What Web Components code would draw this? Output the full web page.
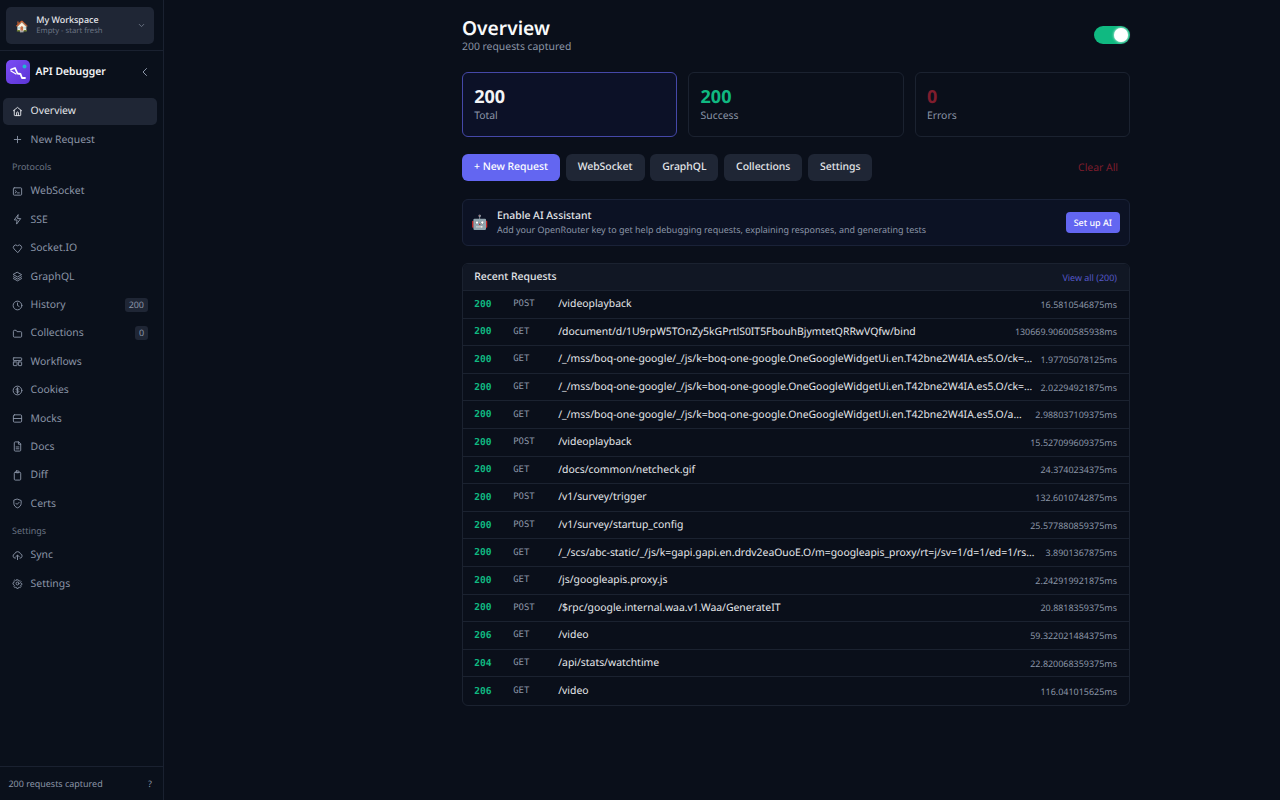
<!DOCTYPE html>
<html>
<head>
<meta charset="utf-8">
<title>API Debugger</title>
<style>
  html, body { margin: 0; height: 100%; background: #0a0f1a; }
  body { font-family: "Noto Sans", sans-serif; color: #f3f4f6; overflow: hidden; text-rendering: geometricPrecision; }
</style>
</head>
<body>
<app-shell>
  <app-sidebar slot="side"></app-sidebar>
  <overview-page></overview-page>
</app-shell>

<script>
const ICONS = {
  home: '<path d="M3 10.5 12 3l9 7.5"/><path d="M5 9v11a1 1 0 0 0 1 1h12a1 1 0 0 0 1-1V9"/><path d="M10 21v-6a2 2 0 0 1 4 0v6"/>',
  plus: '<path d="M5 12h14"/><path d="M12 5v14"/>',
  terminal: '<rect x="3" y="4" width="18" height="16" rx="2"/><path d="m7 10 3 2.5L7 15"/><path d="M12 15h4"/>',
  zap: '<path d="M13 2 5 13h6l-1 9 9-12h-6z"/>',
  heart: '<path d="M12 20.5 4.5 13a5 5 0 0 1 7-7.2l.5.5.5-.5a5 5 0 0 1 7 7.2z"/>',
  layers: '<path d="m12 3 9 5-9 5-9-5z"/><path d="m3 12.5 9 5 9-5"/><path d="m3 16.500 9 5 9-5"/>',
  clock: '<circle cx="12" cy="12" r="9.500"/><path d="M12 6.500V12l3.500 2"/>',
  folder: '<path d="M3 7a2 2 0 0 1 2-2h4l2 3h8a2 2 0 0 1 2 2v8a2 2 0 0 1-2 2H5a2 2 0 0 1-2-2z"/>',
  layout: '<rect x="3" y="4" width="18" height="6" rx="1"/><rect x="3" y="13" width="8" height="8" rx="1"/><rect x="14" y="13" width="7" height="8" rx="1"/>',
  dollar: '<circle cx="12" cy="12" r="9.500"/><path d="M15 9.200c-.5-1-1.600-1.700-3-1.700-1.800 0-3 1-3 2.300 0 3 6 1.500 6 4.400 0 1.300-1.300 2.300-3 2.300-1.400 0-2.500-.7-3-1.700"/><path d="M12 5.800v12.400"/>',
  server: '<rect x="3" y="4" width="18" height="16" rx="2.500"/><path d="M3 12h18"/>',
  file: '<path d="M14 2H7a2 2 0 0 0-2 2v16a2 2 0 0 0 2 2h10a2 2 0 0 0 2-2V7z"/><path d="M14 2v5h5"/><path d="M9 13h6"/><path d="M9 17h6"/>',
  clipboard: '<rect x="5" y="5" width="14" height="17" rx="2"/><rect x="9" y="2" width="6" height="4" rx="1"/>',
  shield: '<path d="M12 2.500 20 5.500v6c0 5-3.500 8.500-8 10-4.500-1.500-8-5-8-10v-6z"/><path d="m8.500 11.500 2.500 2.500 4.500-4.500"/>',
  cloud: '<path d="M12 21v-9"/><path d="m8 15 4-4 4 4"/><path d="M7 18a5 5 0 0 1-1-9.800 6.500 6.500 0 0 1 12.400 0A5 5 0 0 1 17.500 18"/>',
  gear: '<circle cx="12" cy="12" r="3.200"/><path d="M10.300 3h3.400l.5 2.600 1.800.8 2.300-1.500 2.400 2.400-1.500 2.300.8 1.800 2.600.5v3.400l-2.600.5-.8 1.800 1.500 2.300-2.400 2.400-2.300-1.500-1.800.8-.5 2.600h-3.400l-.5-2.600-1.800-.8-2.300 1.500-2.400-2.400 1.500-2.300-.8-1.800L1 13.700v-3.400l2.600-.5.800-1.800-1.500-2.300 2.400-2.400 2.300 1.500 1.800-.8z" transform="translate(1.200 1.200) scale(.9)"/>'
};

const NAV = [
  { label: 'Overview', icon: 'home', active: true },
  { label: 'New Request', icon: 'plus' },
  { heading: 'Protocols' },
  { label: 'WebSocket', icon: 'terminal' },
  { label: 'SSE', icon: 'zap' },
  { label: 'Socket.IO', icon: 'heart' },
  { label: 'GraphQL', icon: 'layers' },
  { label: 'History', icon: 'clock', badge: '200' },
  { label: 'Collections', icon: 'folder', badge: '0' },
  { label: 'Workflows', icon: 'layout' },
  { label: 'Cookies', icon: 'dollar' },
  { label: 'Mocks', icon: 'server' },
  { label: 'Docs', icon: 'file' },
  { label: 'Diff', icon: 'clipboard' },
  { label: 'Certs', icon: 'shield' },
  { heading: 'Settings' },
  { label: 'Sync', icon: 'cloud' },
  { label: 'Settings', icon: 'gear' }
];

const REQUESTS = [
  ['200', 'POST', '/videoplayback', '16.5810546875ms'],
  ['200', 'GET', '/document/d/1U9rpW5TOnZy5kGPrtlS0IT5FbouhBjymtetQRRwVQfw/bind', '130669.90600585938ms'],
  ['200', 'GET', '/_/mss/boq-one-google/_/js/k=boq-one-google.OneGoogleWidgetUi.en.T42bne2W4IA.es5.O/ck=boq-one-google.OneGoogleWidgetUi', '1.97705078125ms'],
  ['200', 'GET', '/_/mss/boq-one-google/_/js/k=boq-one-google.OneGoogleWidgetUi.en.T42bne2W4IA.es5.O/ck=boq-one-google.OneGoogleWidgetUi', '2.02294921875ms'],
  ['200', 'GET', '/_/mss/boq-one-google/_/js/k=boq-one-google.OneGoogleWidgetUi.en.T42bne2W4IA.es5.O/am=boq-one-google.OneGoogleWidgetUi', '2.988037109375ms'],
  ['200', 'POST', '/videoplayback', '15.527099609375ms'],
  ['200', 'GET', '/docs/common/netcheck.gif', '24.3740234375ms'],
  ['200', 'POST', '/v1/survey/trigger', '132.6010742875ms'],
  ['200', 'POST', '/v1/survey/startup_config', '25.577880859375ms'],
  ['200', 'GET', '/_/scs/abc-static/_/js/k=gapi.gapi.en.drdv2eaOuoE.O/m=googleapis_proxy/rt=j/sv=1/d=1/ed=1/rs=AHpOoo', '3.8901367875ms'],
  ['200', 'GET', '/js/googleapis.proxy.js', '2.242919921875ms'],
  ['200', 'POST', '/$rpc/google.internal.waa.v1.Waa/GenerateIT', '20.8818359375ms'],
  ['206', 'GET', '/video', '59.322021484375ms'],
  ['204', 'GET', '/api/stats/watchtime', '22.820068359375ms'],
  ['206', 'GET', '/video', '116.041015625ms']
];

function iconSvg(name, size) {
  return `<svg width="${size}" height="${size}" viewBox="0 0 24 24" fill="none" stroke="currentColor" stroke-width="2" stroke-linecap="round" stroke-linejoin="round">${ICONS[name]}</svg>`;
}

class AppShell extends HTMLElement {
  constructor() {
    super();
    this.attachShadow({ mode: 'open' });
    this.shadowRoot.innerHTML = `
      <style>
        :host { display: flex; height: 100vh; }
        main { flex: 1; min-width: 0; }
      </style>
      <slot name="side"></slot>
      <main><slot></slot></main>
    `;
  }
}

class NavItem extends HTMLElement {
  constructor() {
    super();
    this.attachShadow({ mode: 'open' });
    this.shadowRoot.innerHTML = `
      <style>
        :host { display: flex; align-items: center; height: 26.800px; margin-bottom: 1.600px; padding: 0 9px; gap: 7.600px; border-radius: 5px; color: #8b95a7; font-size: 10.400px; }
        :host([active]) { background: #1f2635; color: #e5e7eb; }
        svg { display: block; flex: none; }
        .label { flex: 1; }
        .badge { display: none; background: #1f2635; color: #8b95a7; font-size: 8.960px; line-height: 14px; padding: 0 4px; border-radius: 3px; }
        :host([badge]) .badge { display: block; }
      </style>
      <span class="icon"></span>
      <span class="label"><slot></slot></span>
      <span class="badge"></span>
    `;
  }

  connectedCallback() {
    const icon = this.shadowRoot.querySelector('.icon');
    icon.style.display = 'block';
    icon.innerHTML = iconSvg(this.getAttribute('icon'), 11);
    this.shadowRoot.querySelector('.badge').textContent = this.getAttribute('badge') || '';
  }
}

class AppSidebar extends HTMLElement {
  constructor() {
    super();
    this.attachShadow({ mode: 'open' });
    const items = NAV.map(n => {
      if (n.heading) return `<div class="heading">${n.heading}</div>`;
      return `<nav-item icon="${n.icon}"${n.active ? ' active' : ''}${n.badge ? ` badge="${n.badge}"` : ''}>${n.label}</nav-item>`;
    }).join('');
    this.shadowRoot.innerHTML = `
      <style>
        :host { display: flex; flex-direction: column; flex: none; width: 164px; box-sizing: border-box; height: 100vh; background: #0a101b; border-right: 1px solid #1a2130; }
        .top { padding: 7px 9px 6px 6px; border-bottom: 1px solid #1a2130; }
        .workspace { display: flex; align-items: center; height: 36.500px; padding: 0 8px 0 9px; background: #1f2635; border-radius: 5px; gap: 7.500px; }
        .emoji { font-size: 11px; line-height: 1; margin-top: 3px; }
        .ws-text { flex: 1; min-width: 0; }
        .ws-name { font-size: 8.960px; font-weight: 500; color: #e5e7eb; line-height: 12px; }
        .ws-sub { font-size: 7.680px; color: #6b7484; line-height: 11px; }
        .chev { color: #6b7484; display: block; }
        .brand { display: flex; align-items: center; padding: 9px 12px 14.500px 6px; gap: 5.500px; }
        .logo { width: 24px; height: 24px; display: block; flex: none; }
        .brand-name { flex: 1; font-size: 10.400px; font-weight: 600; color: #f3f4f6; }
        .collapse { color: #8b95a7; display: block; }
        nav { padding: 0 6px 0 3px; flex: 1; }
        .heading { font-size: 8.960px; color: #6b7484; padding: 0 9px; height: 23.300px; line-height: 24.400px; }
        .foot { display: flex; justify-content: space-between; align-items: center; padding: 0 11px 0 8.500px; height: 33px; border-top: 1px solid #1a2130; font-size: 8.960px; color: #8b95a7; }
      </style>
      <div class="top">
        <div class="workspace">
          <span class="emoji">🏠</span>
          <div class="ws-text">
            <div class="ws-name">My Workspace</div>
            <div class="ws-sub">Empty - start fresh</div>
          </div>
          <svg class="chev" width="9" height="9" viewBox="0 0 24 24" fill="none" stroke="currentColor" stroke-width="2.500" stroke-linecap="round" stroke-linejoin="round"><path d="m6 9 6 6 6-6"/></svg>
        </div>
      </div>
      <div class="brand">
        <svg class="logo" viewBox="0 0 24 24">
          <defs><linearGradient id="g" x1="0" y1="0" x2="1" y2="1"><stop offset="0" stop-color="#7c4df5"/><stop offset="1" stop-color="#5b35d5"/></linearGradient></defs>
          <rect width="24" height="24" rx="5" fill="url(#g)"/>
          <path d="M5 9.500 9 8l2.500 5.500 3 .5 1.500 4h3" fill="none" stroke="#fff" stroke-width="1.800" stroke-linecap="round" stroke-linejoin="round"/>
          <path d="M5 11l5 3" fill="none" stroke="#fff" stroke-width="1.200" stroke-linecap="round"/>
          <circle cx="18.500" cy="6.500" r="2" fill="#22b8cf"/>
        </svg>
        <span class="brand-name">API Debugger</span>
        <svg class="collapse" width="12" height="12" viewBox="0 0 24 24" fill="none" stroke="currentColor" stroke-width="2" stroke-linecap="round" stroke-linejoin="round"><path d="m15 5-7 7 7 7"/></svg>
      </div>
      <nav>${items}</nav>
      <div class="foot"><span>200 requests captured</span><span>?</span></div>
    `;
  }
}

class StatCard extends HTMLElement {
  constructor() {
    super();
    this.attachShadow({ mode: 'open' });
    this.shadowRoot.innerHTML = `
      <style>
        :host { display: block; box-sizing: border-box; height: 65px; padding: 12px 11.200px; border: 1px solid #1b2230; border-radius: 6px; }
        :host([highlight]) { border-color: #4548a8; background: #0c1127; }
        .value { font-size: 18px; font-weight: 700; line-height: 24px; color: var(--value-color, #f3f4f6); }
        .label { font-size: 10.400px; line-height: 14px; color: #8b95a7; }
      </style>
      <div class="value"></div>
      <div class="label"><slot></slot></div>
    `;
  }

  connectedCallback() {
    this.shadowRoot.querySelector('.value').textContent = this.getAttribute('value');
  }
}

class ActionButton extends HTMLElement {
  constructor() {
    super();
    this.attachShadow({ mode: 'open' });
    this.shadowRoot.innerHTML = `
      <style>
        :host { display: block; height: 27px; line-height: 27px; padding: 0 12px; background: #1f2635; color: #e5e7eb; font-size: 10.400px; font-weight: 500; border-radius: 6px; }
        :host([primary]) { background: #6366f1; color: #fff; }
      </style>
      <slot></slot>
    `;
  }
}

class RequestRow extends HTMLElement {
  constructor() {
    super();
    this.attachShadow({ mode: 'open' });
    this.shadowRoot.innerHTML = `
      <style>
        :host { display: flex; align-items: center; height: 27.600px; box-sizing: border-box; padding: 0 12px 0 11.200px; border-bottom: 1px solid #1b2230; }
        :host(:last-child) { border-bottom: none; }
        .status { width: 39px; flex: none; font: 700 9.600px "DejaVu Sans Mono", monospace; color: #10b981; }
        .method { width: 45px; flex: none; font: 8.960px "DejaVu Sans Mono", monospace; color: #8b95a7; }
        .url { flex: 1; min-width: 0; white-space: nowrap; overflow: hidden; text-overflow: ellipsis; font-size: 10.400px; color: #e5e7eb; }
        .time { flex: none; margin-left: 8px; font-size: 8.960px; color: #8b95a7; }
      </style>
      <span class="status"></span><span class="method"></span><span class="url"></span><span class="time"></span>
    `;
  }

  set data(d) {
    const spans = this.shadowRoot.querySelectorAll('span');
    d.forEach((text, i) => { spans[i].textContent = text; });
  }
}

class OverviewPage extends HTMLElement {
  constructor() {
    super();
    this.attachShadow({ mode: 'open' });
    this.shadowRoot.innerHTML = `
      <style>
        :host { display: block; width: 668px; margin-left: 298px; padding-top: 16px; }
        .head { display: flex; justify-content: space-between; align-items: center; height: 38px; margin-bottom: 18px; }
        h1 { margin: 0; font-size: 19.200px; line-height: 24px; font-weight: 600; color: #f9fafb; }
        .sub { font-size: 10.400px; line-height: 14px; color: #8b95a7; }
        .toggle { width: 36px; height: 18px; border-radius: 9px; background: #10b981; position: relative; }
        .toggle::after { content: ""; position: absolute; right: 2px; top: 2px; width: 14px; height: 14px; border-radius: 50%; background: #fff; box-shadow: 0 0 3px #fff; }
        .stats { display: grid; grid-template-columns: repeat(3, 1fr); gap: 11.200px; margin-bottom: 17px; }
        .actions { display: flex; gap: 5.600px; align-items: center; margin-bottom: 18px; }
        .clear { margin-left: auto; margin-right: 12px; font-size: 10.400px; color: #7f1d2d; }
        .banner { display: flex; align-items: center; height: 47px; box-sizing: border-box; padding: 0 9px 0 8.500px; gap: 8px; border: 1px solid #1a2238; border-radius: 6px; background: #0c1224; margin-bottom: 17px; }
        .bot { font-size: 14px; line-height: 1; }
        .b-text { flex: 1; }
        .b-title { font-size: 10.400px; font-weight: 500; line-height: 14px; color: #e5e7eb; }
        .b-desc { font-size: 8.960px; line-height: 13px; color: #8b95a7; }
        .setup { background: #6366f1; color: #fff; font-size: 8.960px; font-weight: 500; height: 21px; line-height: 21px; padding: 0 8px; border-radius: 4px; }
        .recent { border: 1px solid #1b2230; border-radius: 6px; overflow: hidden; }
        .r-head { display: flex; justify-content: space-between; align-items: center; height: 27px; box-sizing: border-box; padding: 0 12px 0 11.200px; background: #111724; border-bottom: 1px solid #1b2230; }
        .r-title { font-size: 10.400px; font-weight: 500; color: #e5e7eb; }
        .r-link { font-size: 8.960px; color: #5558c8; }
      </style>
      <div class="head">
        <div><h1>Overview</h1><div class="sub">200 requests captured</div></div>
        <div class="toggle"></div>
      </div>
      <div class="stats">
        <stat-card value="200" highlight>Total</stat-card>
        <stat-card value="200" style="--value-color:#10b981">Success</stat-card>
        <stat-card value="0" style="--value-color:#7f1d2d">Errors</stat-card>
      </div>
      <div class="actions">
        <action-button primary>+ New Request</action-button>
        <action-button>WebSocket</action-button>
        <action-button>GraphQL</action-button>
        <action-button>Collections</action-button>
        <action-button>Settings</action-button>
        <span class="clear">Clear All</span>
      </div>
      <div class="banner">
        <span class="bot">🤖</span>
        <div class="b-text">
          <div class="b-title">Enable AI Assistant</div>
          <div class="b-desc">Add your OpenRouter key to get help debugging requests, explaining responses, and generating tests</div>
        </div>
        <span class="setup">Set up AI</span>
      </div>
      <div class="recent">
        <div class="r-head"><span class="r-title">Recent Requests</span><span class="r-link">View all (200)</span></div>
        <div class="rows"></div>
      </div>
    `;
    const rows = this.shadowRoot.querySelector('.rows');
    REQUESTS.forEach(r => {
      const row = document.createElement('request-row');
      row.data = r;
      rows.appendChild(row);
    });
  }
}

customElements.define('app-shell', AppShell);
customElements.define('nav-item', NavItem);
customElements.define('app-sidebar', AppSidebar);
customElements.define('stat-card', StatCard);
customElements.define('action-button', ActionButton);
customElements.define('request-row', RequestRow);
customElements.define('overview-page', OverviewPage);
</script>
</body>
</html>
